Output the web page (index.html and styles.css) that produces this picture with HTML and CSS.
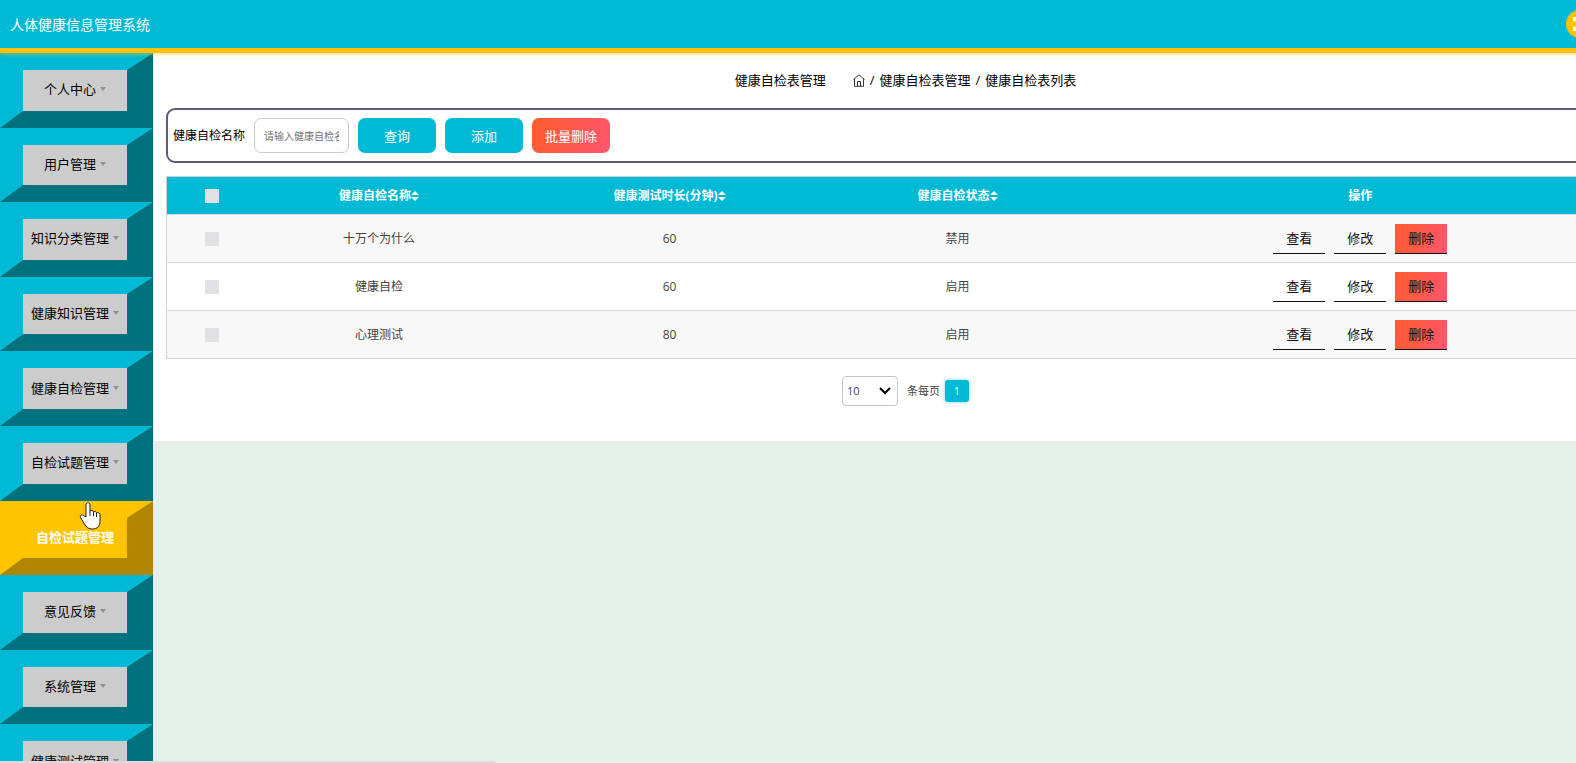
FILE: index.html
```html
<!DOCTYPE html>
<html lang="zh-CN">
<head>
<meta charset="utf-8">
<title>人体健康信息管理系统</title>
<link rel="stylesheet" href="styles.css">
</head>
<body>
<div class="page">
  <header class="topbar">
    <h1 class="brand">人体健康信息管理系统</h1>
    <button class="fullscreen" type="button" aria-label="全屏">
      <svg viewBox="0 0 14 14" width="14" height="14"><path d="M0 0h5L3.500 1.500 6 4 4 6 1.500 3.500 0 5zM14 0v5l-1.500-1.500L10 6 8 4l2.500-2.500L9 0zM0 14V9l1.500 1.500L4 8l2 2-2.500 2.500L5 14zM14 14H9l1.500-1.500L8 10l2-2 2.500 2.500L14 9z"/></svg>
    </button>
  </header>
  <div class="layout">
    <nav class="sidebar">
      <ul class="menu">
        <li class="menu-item"><a class="menu-link caret" href="#">个人中心</a></li>
        <li class="menu-item"><a class="menu-link caret" href="#">用户管理</a></li>
        <li class="menu-item"><a class="menu-link caret" href="#">知识分类管理</a></li>
        <li class="menu-item"><a class="menu-link caret" href="#">健康知识管理</a></li>
        <li class="menu-item"><a class="menu-link caret" href="#">健康自检管理</a></li>
        <li class="menu-item"><a class="menu-link caret" href="#">自检试题管理</a></li>
        <li class="menu-item active"><a class="menu-link" href="#">自检试题管理</a></li>
        <li class="menu-item"><a class="menu-link caret" href="#">意见反馈</a></li>
        <li class="menu-item"><a class="menu-link caret" href="#">系统管理</a></li>
        <li class="menu-item"><a class="menu-link caret" href="#">健康测试管理</a></li>
      </ul>
    </nav>
    <main class="content">
      <div class="crumbs">
        <span class="crumbs-title">健康自检表管理</span>
        <svg class="home" viewBox="0 0 12 13" width="12" height="13"><path d="M.5 5.500L6 .8l5.500 4.700M1.500 5v7.300h9V5M4.500 12V7.500h3V12"/></svg>
        <span>/</span>
        <span>健康自检表管理</span>
        <span>/</span>
        <span>健康自检表列表</span>
      </div>
      <form class="search">
        <label for="name">健康自检名称</label>
        <input class="search-input" id="name" type="text" placeholder="请输入健康自检名称">
        <button class="btn" type="button">查询</button>
        <button class="btn" type="button">添加</button>
        <button class="btn danger" type="button">批量删除</button>
      </form>
      <table class="grid">
        <colgroup><col class="c-check"><col class="c-name"><col class="c-time"><col class="c-state"><col></colgroup>
        <thead>
          <tr>
            <th><input class="check" type="checkbox" aria-label="全选"></th>
            <th>健康自检名称<svg class="sort" viewBox="0 0 8 10" width="8" height="10"><path d="M4 0l4 4H0zM4 10L0 6h8z"/></svg></th>
            <th>健康测试时长(分钟)<svg class="sort" viewBox="0 0 8 10" width="8" height="10"><path d="M4 0l4 4H0zM4 10L0 6h8z"/></svg></th>
            <th>健康自检状态<svg class="sort" viewBox="0 0 8 10" width="8" height="10"><path d="M4 0l4 4H0zM4 10L0 6h8z"/></svg></th>
            <th>操作</th>
          </tr>
        </thead>
        <tbody>
          <tr>
            <td><input class="check" type="checkbox" aria-label="十万个为什么"></td><td>十万个为什么</td><td>60</td><td>禁用</td>
            <td><div class="actions"><button class="act" type="button">查看</button><button class="act" type="button">修改</button><button class="act danger" type="button">删除</button></div></td>
          </tr>
          <tr>
            <td><input class="check" type="checkbox" aria-label="健康自检"></td><td>健康自检</td><td>60</td><td>启用</td>
            <td><div class="actions"><button class="act" type="button">查看</button><button class="act" type="button">修改</button><button class="act danger" type="button">删除</button></div></td>
          </tr>
          <tr>
            <td><input class="check" type="checkbox" aria-label="心理测试"></td><td>心理测试</td><td>80</td><td>启用</td>
            <td><div class="actions"><button class="act" type="button">查看</button><button class="act" type="button">修改</button><button class="act danger" type="button">删除</button></div></td>
          </tr>
        </tbody>
      </table>
      <div class="pager">
        <div class="size">
          <select class="size-select" id="size"><option>10</option></select>
          <svg class="size-arrow" viewBox="0 0 12 8" width="12" height="8"><path d="M1 1l5 5 5-5"/></svg>
        </div>
        <label for="size">条每页</label>
        <button class="page-no" type="button">1</button>
      </div>
    </main>
  </div>
</div>
<svg class="cursor" viewBox="0 0 22 28" width="22" height="28"><path d="M7 15V3c0-3 4-3 4 0v6c1-1 3-.8 3.500.8 1-.8 2.700-.4 3 1 1.500-.6 3.500.3 3.500 2V19c0 5-2.500 8-7.500 8-4 0-6-1.500-8-5l-4-6.500c-1-2 1.500-3.500 3-2z"/><path d="M11 9v5M14.500 10v4.500M17.500 11v4"/></svg>
<div class="statusbar"></div>
</body>
</html>
```
FILE: styles.css
```css
* { box-sizing: border-box; }

body {
  margin: 0;
  min-height: 100vh;
  overflow: hidden;
  background: #e6f0eb;
  color: #000;
  font: 12px/20px "Open Sans", "Noto Sans CJK SC", sans-serif;
}

button, input, select { font: inherit; margin: 0; }

.page { min-width: 1658px; height: 100vh; overflow: hidden; }

.topbar {
  position: relative;
  display: flex;
  align-items: center;
  justify-content: space-between;
  height: 53px;
  padding: 0 64px 0 10px;
  background: #00bad5;
  border-bottom: 5px solid #ffc107;
  box-shadow: 0 1px 4px #ffc10799;
}

.brand { margin: 0; padding-top: 1px; color: #fff; font-size: 14px; font-weight: 400; }

.fullscreen {
  display: flex;
  align-items: center;
  justify-content: center;
  width: 28px;
  height: 28px;
  padding: 0;
  border: 0;
  border-radius: 50%;
  background: #ffc107;
  fill: #fff;
}

.layout { display: flex; align-items: flex-start; }

.sidebar { flex: none; width: 154px; border-right: 1px solid #d5eef2; }

.menu {
  display: grid;
  grid-auto-rows: 1fr;
  height: 746px;
  margin: 0;
  padding: 0;
  list-style: none;
}

.menu-item {
  display: flex;
  border: solid;
  border-width: 17px 26px 17px 23px;
  border-color: #00bad5 #00717d #00717d #00bad5;
  background: #ccc;
}

.menu-link {
  flex: 1;
  display: flex;
  align-items: center;
  justify-content: center;
  gap: 4px;
  padding-bottom: 2px;
  color: #000;
  font-size: 13px;
  text-decoration: none;
}

.caret::after {
  content: "";
  border: 3px solid transparent;
  border-top: 4px solid #909090;
  border-bottom: 0;
}

.active { border-color: #ffc400 #b08500 #b08500 #ffc400; background: #ffc400; }
.active .menu-link { color: #fff; font-weight: 700; }

.content { flex: 1; padding: 17px 13px 35px 12px; background: #fff; }

.crumbs {
  display: flex;
  align-items: center;
  justify-content: center;
  gap: 5px;
  margin-bottom: 18px;
  font-size: 13px;
}

.crumbs-title { margin-right: 22px; }
.home { fill: none; stroke: #333; }

.search {
  display: flex;
  align-items: center;
  gap: 9px;
  margin-bottom: 13px;
  padding: 8px 5px;
  border: 2px solid #5f5b73;
  border-radius: 9px;
}

.search-input {
  width: 95px;
  height: 35px;
  padding: 0 9px;
  border: 1px solid #ccc;
  border-radius: 7px;
  font-size: 10px;
}

.search-input::placeholder { color: #757575; }

.btn {
  width: 78px;
  height: 35px;
  padding: 0;
  border: 0;
  border-radius: 7px;
  background: #00bad5;
  color: #fff;
  font-size: 13px;
}

.danger { background: linear-gradient(110deg, #ff5c2b, #ff5670); }

.grid {
  width: 100%;
  border-collapse: collapse;
  border: 1px solid #d0d0d0;
  table-layout: fixed;
  text-align: center;
}

.c-check { width: 91px; }
.c-name { width: 243px; }
.c-time { width: 338px; }
.c-state { width: 238px; }

.grid th { height: 38px; padding: 0; background: #00bad5; color: #fff; font-weight: 700; }
.grid td { height: 48px; padding: 0; border-top: 1px solid #d8d8d8; color: #444; }
.grid tbody tr:nth-child(odd) { background: #f8f8f8; }

.check {
  display: block;
  appearance: none;
  width: 14px;
  height: 14px;
  margin: 0 auto;
  background: #dfe1e4;
}

.sort { fill: #fff; vertical-align: -1px; }

.actions { display: flex; justify-content: center; gap: 9px; }

.act {
  width: 52px;
  height: 30px;
  padding: 0;
  border: 0;
  border-bottom: 1px solid #111;
  background-color: transparent;
  color: #111;
  font-size: 13px;
}

.pager {
  display: flex;
  align-items: center;
  justify-content: center;
  gap: 5px;
  margin-top: 17px;
  color: #444;
  font-size: 11px;
}

.size { display: grid; align-items: center; margin-right: 4px; }

.size-select {
  grid-area: 1 / 1;
  width: 56px;
  height: 30px;
  padding: 0 4px;
  appearance: none;
  border: 1px solid #c4c4c4;
  border-radius: 4px;
  background: #fff;
  color: #444;
}

.size-arrow {
  grid-area: 1 / 1;
  justify-self: end;
  margin-right: 7px;
  fill: none;
  stroke: #000;
  stroke-width: 2;
  pointer-events: none;
}

.page-no {
  width: 24px;
  height: 22px;
  padding: 0;
  border: 0;
  border-radius: 3px;
  background: #00bad5;
  color: #fff;
  box-shadow: 0 0 4px #00bad580;
}

.cursor {
  position: absolute;
  left: 79px;
  top: 502px;
  fill: #fff;
  stroke: #222;
  pointer-events: none;
}

.statusbar {
  position: fixed;
  left: 0;
  bottom: 0;
  width: 496px;
  height: 2px;
  border-top-right-radius: 2px;
  background: #d8dcdd;
}
```
